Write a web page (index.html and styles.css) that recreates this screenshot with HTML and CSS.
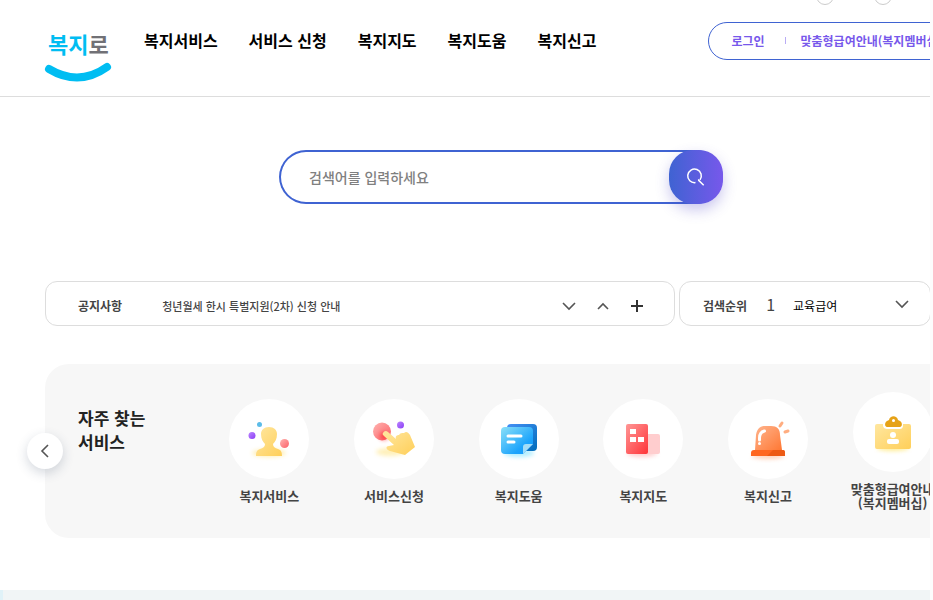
FILE: index.html
```
<!doctype html>
<html lang="ko">

<head>
    <meta charset="UTF-8" />
    <meta name="viewport" content="width=device-width, initial-scale=1.0" />
    <title>복지로</title>
    <link rel="stylesheet" href="styles.css">
</head>

<body>
    <div class="page">
        <header class="header">
            <div class="header-inner">
                <a href="/" class="logo" aria-label="복지로">
                    <svg width="68" height="64" viewBox="0 0 68 64">
                        <text class="logo-text" x="3" y="33">복지<tspan class="logo-gray">로</tspan></text>
                        <path d="M4 49 Q34 67 62 47" fill="none" stroke="#00bdf2" stroke-width="8" stroke-linecap="round" />
                    </svg>
                </a>
                <nav class="nav">
                    <a href="#">복지서비스</a>
                    <a href="#">서비스 신청</a>
                    <a href="#">복지지도</a>
                    <a href="#">복지도움</a>
                    <a href="#">복지신고</a>
                </nav>
                <div class="user">
                    <a href="#">로그인</a>
                    <a href="#">맞춤형급여안내(복지멤버십)</a>
                    <div class="text-size">
                        <button type="button" aria-label="화면 축소"></button>
                        <button type="button" aria-label="화면 확대"></button>
                    </div>
                </div>
            </div>
        </header>

        <main class="main">
            <form class="search" action="#">
                <input type="text" placeholder="검색어를 입력하세요" aria-label="검색어">
                <button type="submit" aria-label="검색">
                    <svg width="20" height="20" viewBox="0 0 20 20" fill="none" stroke="#fff" stroke-width="1.5">
                        <path d="M9.5 15.6A6.8 6.8 0 1 1 14 12.9" />
                        <path d="M12.7 12.2V13.4L17.7 18.2" />
                    </svg>
                </button>
            </form>

            <div class="boards">
                <section class="board notice">
                    <h2>공지사항</h2>
                    <a href="#">청년월세 한시 특벌지원(2차) 신청 안내</a>
                    <div class="board-controls">
                        <button type="button" aria-label="다음 공지">
                            <svg width="14" height="14" viewBox="0 0 14 14"><path d="M1 4l6 6 6-6" /></svg>
                        </button>
                        <button type="button" aria-label="이전 공지">
                            <svg width="14" height="14" viewBox="0 0 14 14"><path d="M2 10l5-5 5 5" /></svg>
                        </button>
                        <button type="button" aria-label="더보기">
                            <svg width="14" height="14" viewBox="0 0 14 14"><path class="plus" d="M1 7h12M7 1v12" /></svg>
                        </button>
                    </div>
                </section>
                <section class="board rank">
                    <h2>검색순위</h2>
                    <span class="rank-number">1</span>
                    <a href="#">교육급여</a>
                    <button type="button" aria-label="순위 펼치기">
                        <svg width="14" height="14" viewBox="0 0 14 14"><path d="M1 4l6 6 6-6" /></svg>
                    </button>
                </section>
            </div>

            <section class="favorites">
                <h2>자주 찾는<br>서비스</h2>
                <ul>
                    <li>
                        <a href="#">
                            <span class="circle">
                                <svg width="48" height="48" viewBox="0 0 48 48">
                                    <ellipse class="glow" cx="24" cy="38" rx="17" ry="4" fill="#ffe68a" />
                                    <circle cx="14.500" cy="9.500" r="2.500" fill="#5cbce8" />
                                    <circle cx="7" cy="20.500" r="3.500" fill="url(#purple)" />
                                    <path d="M16 19c0-4 3-7 8-7s8 3 8 7c0 5-2 8-4 10 0 3 2 4 5 5 3 1 4 3 4 7H11c0-4 1-6 4-7 3-1 5-2 5-5-2-2-4-5-4-10z" fill="url(#yellow)" />
                                    <circle cx="39.500" cy="28.500" r="4.500" fill="url(#pink)" />
                                </svg>
                            </span>
                            복지서비스
                        </a>
                    </li>
                    <li>
                        <a href="#">
                            <span class="circle">
                                <svg width="48" height="48" viewBox="0 0 48 48">
                                    <ellipse class="glow" cx="20" cy="37" rx="14" ry="4" fill="#ffe68a" />
                                    <circle cx="12" cy="16.500" r="9" fill="url(#pink)" />
                                    <circle cx="14" cy="21" r="4" fill="#f22" class="glow" />
                                    <circle cx="30.500" cy="10" r="3.500" fill="url(#purple)" />
                                    <path d="M13 18c1-2 3-3 5-1l8 7c-1-3 1-4 3-4 1-2 3-2 5-2 2-2 4-1 6 2l5 12-10 8-15-4c-5-2-4-5-1-5l5-1-10-9c-1-1-2-2-1-3z" fill="url(#yellow)" />
                                </svg>
                            </span>
                            서비스신청
                        </a>
                    </li>
                    <li>
                        <a href="#">
                            <span class="circle">
                                <svg width="48" height="48" viewBox="0 0 48 48">
                                    <ellipse class="glow" cx="24" cy="38" rx="15" ry="4" fill="#7de3ff" />
                                    <rect x="12" y="9" width="30" height="27" rx="4" fill="url(#navy)" />
                                    <path d="M10 12h24a4 4 0 0 1 4 4v13L28 39H10a4 4 0 0 1-4-4V16a4 4 0 0 1 4-4z" fill="url(#sky)" />
                                    <path d="M28 39v-7q0-3 3-3h7z" fill="#a2dcf7" />
                                    <path d="M13 21h13M13 27h6" fill="none" stroke="#fff" stroke-width="3" stroke-linecap="round" />
                                </svg>
                            </span>
                            복지도움
                        </a>
                    </li>
                    <li>
                        <a href="#">
                            <span class="circle">
                                <svg width="48" height="48" viewBox="0 0 48 48">
                                    <ellipse class="glow" cx="23" cy="38" rx="15" ry="4" fill="#ffb0b0" />
                                    <rect x="26" y="19" width="15" height="20" rx="2" fill="#ffcdce" />
                                    <rect x="7" y="9" width="22" height="30" rx="2" fill="url(#red)" />
                                    <path d="M11 14h6v5h-6zM11 22h6v5h-6zM19 22h6v5h-6z" fill="#fff" />
                                </svg>
                            </span>
                            복지지도
                        </a>
                    </li>
                    <li>
                        <a href="#">
                            <span class="circle">
                                <svg width="48" height="48" viewBox="0 0 48 48">
                                    <ellipse class="glow" cx="24" cy="41" rx="16" ry="3" fill="#ffb38a" />
                                    <path d="M11 35l1-15c1-6 4-9 9-9h6c6 0 9 3 9 9l2 15z" fill="url(#orange)" />
                                    <path d="M10 35h29q2 0 2 3v3H7v-3q0-3 3-3z" fill="#ff6720" />
                                    <path d="M29 35h10q2 0 2 3v3H23z" fill="#ed5a14" />
                                    <path d="M15.500 25v-2c0-4 1-6 5-7" fill="none" stroke="#fff" stroke-width="3" stroke-linecap="round" />
                                    <circle cx="15.500" cy="28.500" r="1.500" fill="#fff" />
                                    <path d="M36 11l2-3M41 17l3-1" fill="none" stroke="#ffad80" stroke-width="3" stroke-linecap="round" />
                                </svg>
                            </span>
                            복지신고
                        </a>
                    </li>
                    <li>
                        <a href="#">
                            <span class="circle">
                                <svg width="48" height="48" viewBox="0 0 48 48">
                                    <ellipse class="glow" cx="24" cy="40" rx="16" ry="3" fill="#ffe14d" />
                                    <path d="M8 16h6v1c0 3 2 4 5 4h11c3 0 4-1 4-4v-1h6q2 0 2 2v21q0 2-2 2H8q-2 0-2-2V18q0-2 2-2z" fill="url(#yellow)" />
                                    <path d="M18 19c-2 0-3-4 0-6l2-1c1-5 8-5 9 0l2 1c3 2 2 6 0 6z" fill="#e6a216" />
                                    <circle cx="24.500" cy="12.500" r="1.500" fill="#fff" />
                                    <circle cx="24" cy="27" r="3" fill="#fff" />
                                    <rect x="18" y="31" width="12" height="5" rx="2" fill="#fff" />
                                </svg>
                            </span>
                            맞춤형급여안내<br>(복지멤버십)
                        </a>
                    </li>
                </ul>
                <button type="button" class="prev" aria-label="이전">
                    <svg width="14" height="14" viewBox="0 0 14 14"><path d="M10 1L4 7l6 6" /></svg>
                </button>
            </section>
        </main>

        <div class="banner"></div>
    </div>

    <!-- shared icon gradients -->
    <svg class="defs" width="0" height="0" aria-hidden="true">
        <defs>
            <linearGradient id="yellow" x2="1" y2="1"><stop stop-color="#ffe7a0" /><stop offset="1" stop-color="#ffcf59" /></linearGradient>
            <linearGradient id="pink" x2="1" y2="1"><stop stop-color="#ffb3b0" /><stop offset="1" stop-color="#fc6167" /></linearGradient>
            <linearGradient id="purple" x2="1" y2="1"><stop stop-color="#bd86ff" /><stop offset="1" stop-color="#8a3df5" /></linearGradient>
            <linearGradient id="navy" x2="1" y2="1"><stop stop-color="#4590f5" /><stop offset="1" stop-color="#006cba" /></linearGradient>
            <linearGradient id="sky" x2="1" y2="1"><stop stop-color="#8be0f8" /><stop offset="0.700" stop-color="#1ca4fc" /><stop offset="1" stop-color="#1698ff" /></linearGradient>
            <linearGradient id="red" x2="1" y2="1"><stop stop-color="#ff9796" /><stop offset="1" stop-color="#ff3338" /></linearGradient>
            <linearGradient id="orange" x2="1" y2="1"><stop stop-color="#ffb48d" /><stop offset="1" stop-color="#ff7834" /></linearGradient>
        </defs>
    </svg>
</body>

</html>
```

FILE: styles.css
```
:root {
    --blue: #3f63d2;
    --purple: #7758eb;
    --line: #dddddd;
    --text: #444444;
}

* {
    box-sizing: border-box;
    margin: 0;
    padding: 0;
}

body {
    background-color: #fcfcfc;
    font-family: "Noto Sans CJK KR", "Noto Sans", sans-serif;
    font-size: 12px;
    color: var(--text);
}

a {
    color: inherit;
    text-decoration: none;
}

button {
    border: 0;
    background: none;
    cursor: pointer;
}

ul {
    list-style: none;
}

svg {
    display: block;
}

.page {
    margin-right: 3px;
    min-height: 100vh;
    background-color: #fff;
    overflow: hidden;
    display: flex;
    flex-direction: column;
}

/* header */
.header {
    border-bottom: 1px solid var(--line);
    padding: 0 45px;
}

.header-inner {
    display: flex;
    align-items: flex-start;
    height: 96px;
    min-width: 912px;
    white-space: nowrap;
}

.logo {
    width: 66px;
    margin-top: 20px;
}

.logo svg {
    overflow: visible;
}

.logo-text {
    font-size: 22px;
    font-weight: 700;
    fill: #00bdf2;
}

.logo-gray {
    fill: #717176;
}

.nav {
    display: flex;
    gap: 31px;
    margin: 28px 0 0 33px;
    font-size: 16px;
    font-weight: 700;
    line-height: 24px;
    color: #000;
}

.user {
    position: relative;
    display: flex;
    align-items: center;
    height: 38px;
    margin: 22px 0 0 112px;
    padding: 0 22px 2px;
    border: 1px solid var(--blue);
    border-radius: 20px;
    color: var(--purple);
    font-weight: 700;
}

.user a + a {
    display: flex;
    align-items: center;
}

.user a + a::before {
    content: "";
    width: 1px;
    height: 7px;
    margin: 0 15px 0 20px;
    background-color: #b9acf5;
}

.text-size {
    position: absolute;
    top: -36px;
    left: 107px;
    display: flex;
    gap: 40px;
}

.text-size button {
    width: 18px;
    height: 18px;
    border: 1px solid #ccc;
    border-radius: 50%;
}

/* main */
.main {
    min-width: 1002px;
    padding: 53px 45px 52px;
}

.search {
    display: flex;
    width: 444px;
    height: 54px;
    margin: 0 auto 77px;
    border-radius: 27px;
    box-shadow: inset 0 0 0 2px var(--blue);
}

.search input {
    flex: 1;
    padding-left: 30px;
    border: 0;
    outline: 0;
    background: none;
    font-family: inherit;
    font-size: 14px;
    font-weight: 500;
    color: #222;
}

.search input::placeholder {
    color: #808080;
}

.search button {
    display: flex;
    align-items: center;
    justify-content: center;
    width: 54px;
    border-radius: 24px;
    background: linear-gradient(90deg, var(--blue), var(--purple));
    box-shadow: 0 6px 14px rgba(80, 70, 200, 0.3);
}

.boards {
    display: flex;
    gap: 4px;
    margin-bottom: 38px;
}

.board {
    display: flex;
    align-items: center;
    height: 45px;
    border: 1px solid var(--line);
    border-radius: 12px;
    padding-top: 4px;
}

.board h2 {
    font-size: 12px;
    font-weight: 700;
}

.board svg,
.prev svg {
    fill: none;
    stroke: #555;
    stroke-width: 1.6;
}

.board .plus {
    stroke: #333;
    stroke-width: 2;
}

.notice {
    flex: 1;
    max-width: 630px;
    padding-left: 32px;
    padding-right: 30px;
}

.notice a {
    margin-left: 40px;
    font-size: 11px;
    font-weight: 500;
}

.board-controls {
    display: flex;
    gap: 20px;
    margin-left: auto;
}

.rank {
    width: 252px;
    padding-left: 23px;
    padding-right: 21px;
}

.rank-number {
    margin: 0 18px 4px 19px;
    font-size: 16px;
    line-height: 20px;
}

.rank a {
    color: #000;
}

.rank button {
    margin-left: auto;
    margin-bottom: 4px;
}

/* favorite services */
.favorites {
    position: relative;
    display: flex;
    align-items: center;
    height: 174px;
    padding: 0 2px 0 33px;
    border-radius: 24px;
    background-color: #f7f7f7;
}

.favorites h2 {
    align-self: flex-start;
    width: 129px;
    margin-top: 42px;
    font-size: 17px;
    font-weight: 700;
    line-height: 24px;
    color: #222;
}

.favorites ul {
    flex: 1;
    display: grid;
    grid-template-columns: repeat(6, 1fr);
    align-items: center;
}

.favorites a {
    display: block;
    font-size: 13px;
    font-weight: 700;
    line-height: 14px;
    text-align: center;
}

.circle {
    display: flex;
    align-items: center;
    justify-content: center;
    width: 80px;
    height: 80px;
    margin: 0 auto 10px;
    border-radius: 50%;
    background-color: #fff;
}

.glow {
    filter: blur(2px);
    opacity: 0.6;
}

.prev {
    position: absolute;
    left: -18px;
    top: 69px;
    display: flex;
    align-items: center;
    justify-content: center;
    width: 36px;
    height: 36px;
    border-radius: 50%;
    background-color: #fff;
    box-shadow: 0 4px 12px rgba(40, 60, 90, 0.2);
}

.banner {
    flex: 1;
    border-left: 3px solid #e0f2f8;
    background-color: #f1f5f6;
}

.defs {
    position: absolute;
}
```
